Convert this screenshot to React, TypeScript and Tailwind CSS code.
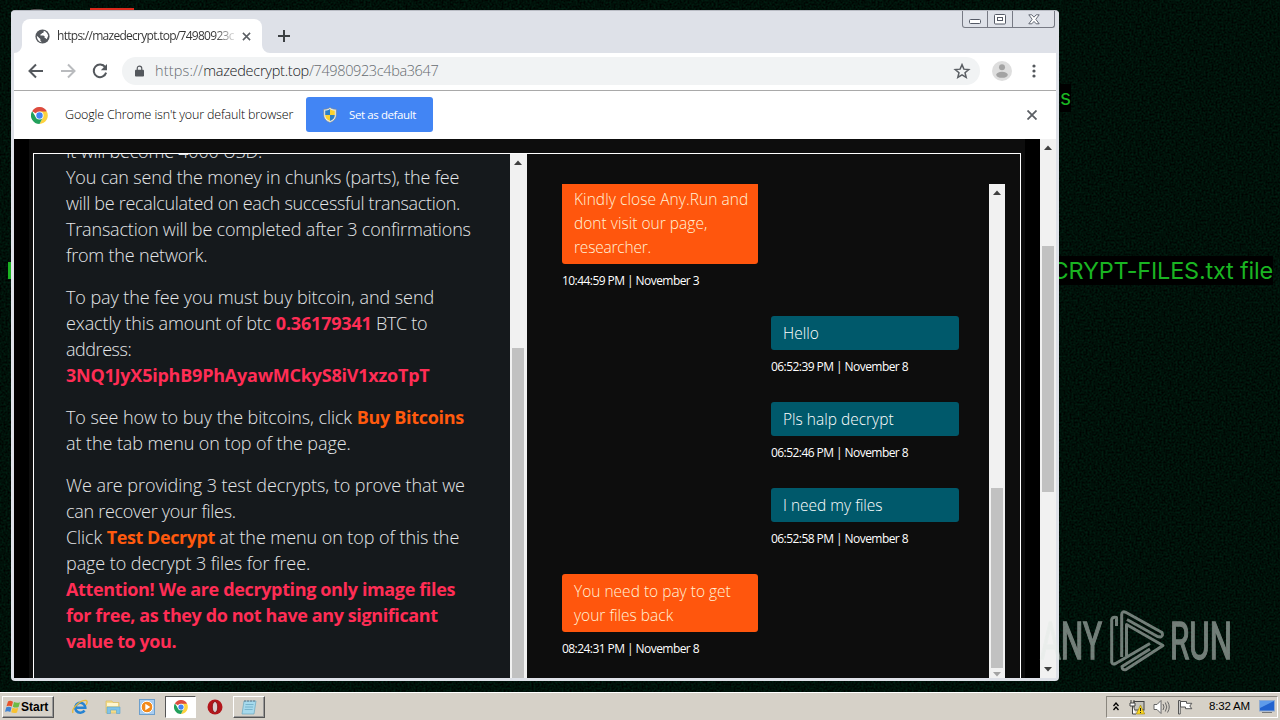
import type { ReactNode } from "react";

const CHAT = [
  {
    from: "support",
    time: "10:44:59 PM | November 3",
    lines: [
      <span className="tracking-[0.07px]">Kindly close Any.Run and</span>,
      <span className="tracking-[0.02px]">dont visit our page,</span>,
      <span className="tracking-[-0.2px]">researcher.</span>,
    ],
  },
  { from: "user", time: "06:52:39 PM | November 8", lines: ["Hello"] },
  { from: "user", time: "06:52:46 PM | November 8", lines: ["Pls halp decrypt"] },
  { from: "user", time: "06:52:58 PM | November 8", lines: ["I need my files"] },
  { from: "support", time: "08:24:31 PM | November 8", lines: ["You need to pay to get", "your files back"] },
];

function Arrow({ down = false, color = "#404040" }: { down?: boolean; color?: string }) {
  return (
    <svg viewBox="0 0 8 5" className={down ? "h-[5px] w-2 rotate-180" : "h-[5px] w-2"}>
      <path d="M0 5 4 0.5 8 5z" fill={color} />
    </svg>
  );
}

function ChromeLogo({ className }: { className?: string }) {
  return (
    <svg viewBox="0 0 48 48" className={className}>
      <path d="M24 24 3.2 12A24 24 0 0 1 44.800 12z" fill="#dd4b3e" />
      <path d="M24 13h20.800A24 24 0 0 1 24 48l9.500-18.500z" fill="#fdd23e" />
      <path d="M33.500 29.500 24 48A24 24 0 0 1 3.200 12l11.300 17.500z" fill="#22a05b" />
      <circle cx="24" cy="24" r="11.500" fill="#fff" />
      <circle cx="24" cy="24" r="9" fill="#4384f3" />
    </svg>
  );
}

function Shield() {
  return (
    <svg viewBox="0 0 14 16" className="h-4 w-3.5">
      <path d="M7 .5C5 2 3 2.300.8 2.300V8c0 4 3 6.300 6.200 7.500C10.200 14.300 13.200 12 13.200 8V2.300C11 2.300 9 2 7 .5z" fill="#e9edf0" stroke="#8c8a72" strokeWidth=".6" />
      <path d="M7 2C5.500 3 4 3.500 2.200 3.500V8H7z" fill="#2b7fc8" />
      <path d="M7 2c1.500 1 3 1.500 4.800 1.500V8H7z" fill="#fbd22f" />
      <path d="M2.200 8H7v6C4 13 2.200 11 2.200 8z" fill="#fbd22f" />
      <path d="M11.800 8H7v6c3-1 4.800-3 4.800-6z" fill="#2b7fc8" />
    </svg>
  );
}

function CaptionButtons() {
  return (
    <div className="absolute top-0 right-[4px] flex h-[17px] rounded-b-[3px] border border-t-0 border-[#777a84]">
      <div className="flex w-[25px] items-center justify-center border-r border-[#777a84]">
        <svg viewBox="0 0 12 5" className="mt-1 h-[5px] w-3">
          <rect x=".5" y=".5" width="11" height="4" rx="1" fill="#fff" stroke="#555a66" />
        </svg>
      </div>
      <div className="flex w-[25px] items-center justify-center border-r border-[#777a84]">
        <svg viewBox="0 0 12 11" className="h-[11px] w-3" fill="#fff" stroke="#555a66">
          <rect x=".5" y=".5" width="11" height="9.500" rx="1" />
          <rect x="3.500" y="3.500" width="5" height="3" />
        </svg>
      </div>
      <div className="flex w-[41px] items-center justify-center">
        <svg viewBox="0 0 12 11" className="h-[11px] w-3">
          <path d="M.8.8h3L6 3.200 8.200.8h3L7.800 5.300l3.400 4.500h-3L6 7.400 3.800 9.800h-3l3.400-4.500z" fill="#fff" stroke="#555a66" strokeWidth=".9" />
        </svg>
      </div>
    </div>
  );
}

function TabStrip() {
  return (
    <div className="relative flex h-[42px] shrink-0 items-end bg-[#dee1e8] pl-[3px]">
      <svg viewBox="0 0 8 8" className="h-2 w-2">
        <path d="M8 0v8H0a8 8 0 0 0 8-8z" fill="#fff" />
      </svg>
      <div className="flex h-[34px] w-[240px] items-center rounded-t-lg bg-white pr-[11px] pl-3">
        <svg viewBox="0 0 24 24" className="h-[17px] w-[17px]">
          <circle cx="12" cy="12" r="10" fill="#54585d" />
          <path d="M4 11 9 15.500V18l2 2c-4 0-7-4-7-9zM14 4c3 1 5.500 4 6 7l-2 5-2-2h-1v-2.500l-2-1H9V9l2-1V7h2z" fill="#fff" />
        </svg>
        <div className="w-[186px] shrink-0 bg-linear-to-r from-[#333] from-88% to-[#fff] bg-clip-text pl-1.5 font-['Open_Sans',sans-serif] text-[12px] tracking-[-0.72px] whitespace-nowrap text-transparent">
          https://mazedecrypt.top/74980923c
        </div>
        <svg viewBox="0 0 10 10" className="ml-auto h-[9px] w-[9px]" stroke="#5b5f64" strokeWidth="1.700">
          <path d="m1 1 8 8M9 1 1 9" />
        </svg>
      </div>
      <svg viewBox="0 0 8 8" className="h-2 w-2">
        <path d="M0 0v8h8a8 8 0 0 1-8-8z" fill="#fff" />
      </svg>
      <svg viewBox="0 0 12 12" className="mb-[11px] ml-2 h-3 w-3" stroke="#3c4043" strokeWidth="2">
        <path d="M6 0v12M0 6h12" />
      </svg>
      <CaptionButtons />
    </div>
  );
}

function Toolbar() {
  return (
    <div className="flex h-[38px] shrink-0 items-center border-b border-[#a9a9a9] bg-white pb-px pl-[14px]">
      <svg viewBox="0 0 16 16" className="h-4 w-4" fill="none" stroke="#54585d" strokeWidth="2">
        <path d="M15 8H2M8 1.500 1.500 8 8 14.500" />
      </svg>
      <svg viewBox="0 0 16 16" className="ml-4 h-4 w-4" fill="none" stroke="#b9bbbe" strokeWidth="2">
        <path d="M1 8h13M8 1.500 14.500 8 8 14.500" />
      </svg>
      <svg viewBox="0 0 16 16" className="ml-4 h-4 w-4">
        <path d="M13.200 4.200A6.300 6.300 0 1 0 14.100 9.600" fill="none" stroke="#54585d" strokeWidth="2" />
        <path d="M15 1v6.200H8.800z" fill="#54585d" />
      </svg>
      <div className="ml-3.5 flex h-7 w-[858px] items-center rounded-full bg-[#f1f3f4] pr-[9px] pl-[13px]">
        <svg viewBox="0 0 10 12" className="h-3 w-[9px]">
          <rect x="0" y="4.500" width="10" height="7.500" rx="1" fill="#54585d" />
          <path d="M2.500 5V3a2.500 2.500 0 0 1 5 0v2" fill="none" stroke="#54585d" strokeWidth="1.300" />
        </svg>
        <div className="ml-[11px] flex-1 font-['Open_Sans',sans-serif] text-[14.5px] font-light text-[#666b70]">
          <span className="tracking-[0.15px]">https://</span>
          <span className="tracking-[-0.27px] text-[#202124]">mazedecrypt.top</span>
          <span className="tracking-[-0.38px]">/74980923c4ba3647</span>
        </div>
        <svg viewBox="0 0 24 24" className="h-[18px] w-[18px]" fill="none" stroke="#5b5f64" strokeWidth="2">
          <path d="m12 3.500 2.500 6 6.500.5-5 4.200 1.600 6.300L12 17.200l-5.600 3.300L8 14.200 3 10l6.500-.5z" />
        </svg>
      </div>
      <svg viewBox="0 0 20 20" className="ml-3 h-5 w-5">
        <circle cx="10" cy="10" r="10" fill="#dedede" />
        <circle cx="10" cy="6.300" r="3" fill="#a3a3a3" />
        <ellipse cx="10" cy="13.800" rx="5.800" ry="3" fill="#a3a3a3" />
      </svg>
      <svg viewBox="0 0 4 14" className="ml-5 h-[14px] w-1" fill="#54585d">
        <circle cx="2" cy="2" r="1.600" />
        <circle cx="2" cy="7" r="1.600" />
        <circle cx="2" cy="12" r="1.600" />
      </svg>
    </div>
  );
}

function InfoBar() {
  return (
    <div className="flex h-12 shrink-0 items-center bg-white pr-[19px] pl-[17px]">
      <ChromeLogo className="h-[17px] w-[17px]" />
      <span className="ml-[17px] w-[241px] font-['Open_Sans',sans-serif] text-[12.5px] font-light tracking-[-0.16px] whitespace-nowrap text-black">
        Google Chrome isn't your default browser
      </span>
      <div className="mb-px flex h-[35px] w-[127px] items-center rounded-[3px] bg-[#4285f4] pl-[17px]">
        <Shield />
        <span className="ml-3 font-['Open_Sans',sans-serif] text-[11.5px] tracking-[-0.4px] whitespace-nowrap text-white">Set as default</span>
      </div>
      <svg viewBox="0 0 10 10" className="ml-auto h-2.5 w-2.5" stroke="#5b5f64" strokeWidth="1.800">
        <path d="m.5.5 9 9M9.500.5l-9 9" />
      </svg>
    </div>
  );
}

function Pink({ children }: { children: ReactNode }) {
  return <b className="font-bold text-[#ff2d55]">{children}</b>;
}

function Orange({ children }: { children: ReactNode }) {
  return <b className="font-bold text-[#ff5a0e]">{children}</b>;
}

function Line({ children, className = "tracking-[-0.2px]" }: { children: ReactNode; className?: string }) {
  return <div className={"h-[26px] whitespace-nowrap " + className}>{children}</div>;
}

function Instructions() {
  return (
    <div className="h-full flex-1 overflow-hidden bg-[#15191c] pl-8 font-['Open_Sans',sans-serif] text-[18px] leading-[25px] font-light text-[#e4e6e8]">
      <div className="-mt-[15px] flex flex-col gap-4">
        <div>
          <Line>It will become 4000 USD.</Line>
          <Line className="tracking-[-0.18px]">You can send the money in chunks (parts), the fee</Line>
          <Line className="tracking-[-0.31px]">will be recalculated on each successful transaction.</Line>
          <Line className="tracking-[-0.18px]">Transaction will be completed after 3 confirmations</Line>
          <Line>from the network.</Line>
        </div>
        <div>
          <Line className="tracking-[-0.07px]">To pay the fee you must buy bitcoin, and send</Line>
          <Line className="tracking-[-0.09px]">
            exactly this amount of btc <Pink><span className="tracking-[-0.2px]">0.36179341</span></Pink>
            <span className="tracking-[-0.3px]"> BTC to</span>
          </Line>
          <Line className="tracking-[-0.45px]">address:</Line>
          <Line className="tracking-[-0.23px]">
            <Pink>3NQ1JyX5iphB9PhAyawMCkyS8iV1xzoTpT</Pink>
          </Line>
        </div>
        <div>
          <Line className="tracking-[-0.07px]">
            To see how to buy the bitcoins, click <Orange><span className="tracking-[-0.3px]">Buy Bitcoins</span></Orange>
          </Line>
          <Line className="tracking-[-0.08px]">at the tab menu on top of the page.</Line>
        </div>
        <div>
          <Line className="tracking-[-0.06px]">We are providing 3 test decrypts, to prove that we</Line>
          <Line className="tracking-[-0.29px]">can recover your files.</Line>
          <Line className="tracking-[-0.07px]">
            Click <Orange><span className="tracking-[-0.45px]">Test Decrypt</span></Orange> at the menu on top of this the
          </Line>
          <Line className="tracking-[-0.08px]">page to decrypt 3 files for free.</Line>
          <Line className="tracking-[-0.36px]">
            <Pink>Attention! We are decrypting only image files</Pink>
          </Line>
          <Line className="tracking-[-0.4px]">
            <Pink>for free, as they do not have any significant</Pink>
          </Line>
          <Line className="tracking-[-0.43px]">
            <Pink>value to you.</Pink>
          </Line>
        </div>
      </div>
    </div>
  );
}

function Chat() {
  return (
    <div className="mt-[30px] ml-[35px] flex w-[443px] overflow-hidden">
      <div className="-mt-[2px] w-[397px] font-['Open_Sans',sans-serif]">
        {CHAT.map((m) => (
          <div key={m.time} className={m.from === "user" ? "ml-auto w-[188px]" : "w-[196px]"}>
            <div
              className={
                m.from === "user"
                  ? "rounded-[3px] bg-[#00596b] py-[5px] pl-3 text-[15.5px] leading-6 font-light whitespace-nowrap text-white"
                  : "rounded-[3px] bg-[#ff560d] py-[5px] pl-3 text-[15.5px] leading-6 font-light whitespace-nowrap text-[#fff2d8]"
              }
            >
              {m.lines.map((l, i) => (
                <div key={i}>{l}</div>
              ))}
            </div>
            <div className="mt-2 mb-[26px] h-[18px] text-[12px] leading-[18px] tracking-[-0.56px] whitespace-nowrap text-white">{m.time}</div>
          </div>
        ))}
      </div>
      <div className="ml-auto flex w-4 flex-col items-center bg-[#f1f1f1] pt-1.5">
        <Arrow />
        <div className="mt-[293px] h-[180px] w-3 bg-[#c1c1c1]" />
        <div className="mt-1">
          <Arrow down color="#a3a3a3" />
        </div>
      </div>
    </div>
  );
}

function Page() {
  return (
    <div className="flex min-h-0 flex-1 overflow-hidden bg-black">
      <div className="ml-[15px] flex w-[996px] flex-col bg-[#0d0d0d] pt-[14px] pl-1">
        <div className="flex min-h-0 w-[988px] flex-1 border border-b-0 border-white">
          <Instructions />
          <div className="flex w-[17px] shrink-0 flex-col bg-[#f1f1f1] pt-1.5 pl-[2px]">
            <div className="pl-[2px]">
              <Arrow />
            </div>
            <div className="mt-[183px] w-3 flex-1 bg-[#c1c1c1]" />
          </div>
          <div className="flex w-[493px] shrink-0">
            <Chat />
          </div>
        </div>
      </div>
      <div className="ml-auto flex w-4 flex-col items-center bg-[#f1f1f1] pt-1.5">
        <Arrow />
        <div className="mt-[96px] h-[246px] w-3 bg-[#c1c1c1]" />
        <div className="mt-auto mb-1.5">
          <Arrow down />
        </div>
      </div>
    </div>
  );
}

function Watermark() {
  return (
    <svg viewBox="0 0 220 70" className="absolute top-[605px] left-[1036px] h-[70px] w-[220px] opacity-50">
      <g fill="#e4ebe7" fontFamily="Roboto, sans-serif" fontSize="52" stroke="#e4ebe7" strokeWidth="1.4">
        <text x="4" y="54" textLength="62" lengthAdjust="spacingAndGlyphs">ANY</text>
        <text x="134" y="54" textLength="62" lengthAdjust="spacingAndGlyphs">RUN</text>
      </g>
      <path
        d="M80.500 21v-8.500q-4-1-4.800 2V57q.5 3 4 1.500L114 38.500M85.700 52V9.500q.3-4 4-2.200L126 27.500q1.500 3.500-1.500 4.500l-3-.5L91 14.500M90.500 51V19.500L127 40.500 90 64.500q-4 1-4-3L114 44"
        fill="none"
        stroke="#e4ebe7"
        strokeWidth="3"
        strokeLinejoin="round"
      />
    </svg>
  );
}

function Taskbar() {
  return (
    <div className="absolute bottom-0 left-0 flex h-[28px] w-full items-center border-t border-white bg-[#d6d1c8] pl-0.5">
      <div className="flex h-[22px] w-[52px] items-center border border-t-white border-r-[#555] border-b-[#555] border-l-white pl-0.5 shadow-[inset_-1px_-1px_#999]">
        <svg viewBox="0 0 16 14" className="h-[14px] w-4">
          <path d="M3 1.500q2-1.500 5 .3L6.800 6.500Q4 5 1.500 6.300z" fill="#e8532b" />
          <path d="M9 2q3 1.500 6 .2L13.600 7q-3 1.300-5.800-.3z" fill="#6cbb45" />
          <path d="M1.300 7.300Q4 6 6.500 7.500L5.300 12Q3 10.500 0 11.800z" fill="#3f83d3" />
          <path d="M7.500 7.800q3 1.400 5.700.3L12 12.500q-3 1.300-5.800-.2z" fill="#f8c231" />
        </svg>
        <span className="font-['Liberation_Sans',sans-serif] text-[12px] font-bold text-black">Start</span>
      </div>
      <svg viewBox="0 0 16 16" className="ml-[18px] h-4 w-4">
        <path d="M12.500 11.500A5 5 0 1 1 13.300 8.800H4.500" fill="none" stroke="#2683d2" strokeWidth="2.600" />
        <path d="M1 14C-1 9 9 1 14 1.500c2 .5 1 3 0 4.500" fill="none" stroke="#e6b93a" strokeWidth="1.300" />
      </svg>
      <svg viewBox="0 0 16 16" className="ml-[17px] h-4 w-4">
        <path d="M1 2h6l1 1.500h6V14H1z" fill="#f3dc8a" stroke="#d8b957" strokeWidth=".6" />
        <path d="M2 4h11v3H2z" fill="#fff6cf" />
        <path d="M2 8h13v6.500h-3.500V11h-6v3.500H2z" fill="#7fc3e8" stroke="#5ba4cf" strokeWidth=".6" />
      </svg>
      <svg viewBox="0 0 16 16" className="ml-[18px] h-4 w-4">
        <rect x=".5" y=".5" width="15" height="15" fill="#a9cdf0" stroke="#6d9fcc" />
        <circle cx="8" cy="8" r="5.800" fill="#f28a1c" stroke="#fff" />
        <path d="M6.300 4.700v6.600L11.300 8z" fill="#fff" />
      </svg>
      <div className="ml-[10px] flex h-[22px] w-[31px] items-center justify-center border border-t-[#555] border-r-white border-b-white border-l-[#555] bg-white">
        <ChromeLogo className="h-[14px] w-[14px]" />
      </div>
      <svg viewBox="0 0 16 16" className="ml-[11px] h-4 w-4">
        <circle cx="8" cy="8" r="7.500" fill="#b3161b" />
        <ellipse cx="8" cy="8" rx="2.700" ry="5.500" fill="#d9cfcf" stroke="#7c0d10" strokeWidth=".8" />
      </svg>
      <div className="ml-[10px] flex h-[22px] w-[32px] items-center justify-center border border-t-white border-r-[#555] border-b-[#555] border-l-white shadow-[inset_-1px_-1px_#999]">
        <svg viewBox="0 0 16 16" className="h-4 w-4">
          <path d="M3 2h12l-2 13H1z" fill="#a6d9ec" stroke="#6ba8bf" strokeWidth=".7" />
          <path d="M4.500 5.500h8M4 8h8M3.600 10.500h8" stroke="#6cabc4" strokeWidth=".8" />
          <path d="M4 1v2M7 1v2M10 1v2M13 1v2" stroke="#567" strokeWidth=".8" />
        </svg>
      </div>
      <div className="mr-[2px] ml-auto flex h-[22px] w-[172px] items-center border border-t-[#8a867e] border-r-white border-b-white border-l-[#8a867e] pl-1.5">
        <svg viewBox="0 0 6 9" className="h-[9px] w-1.5" fill="none" stroke="#000" strokeWidth="1.300">
          <path d="m.5 4 2.500-3 2.500 3M.5 8 3 5l2.500 3" />
        </svg>
        <svg viewBox="0 0 16 16" className="ml-[10px] h-4 w-4">
          <rect x="5" y="2.500" width="10" height="8.500" fill="#c6c4bd" stroke="#444" />
          <path d="M2 1v3M5 1v3M1 4h5v3H1zM3.500 7v8H7" fill="#fff" stroke="#444" />
          <path d="m11.500 6 4.200 9H7.300z" fill="#f9d51f" stroke="#9b8210" strokeWidth=".6" />
          <path d="M11.500 9v3M11.500 13v1" stroke="#222" />
        </svg>
        <svg viewBox="0 0 17 16" className="ml-2 h-4 w-[17px]" fill="none" stroke="#666">
          <path d="M1 5.500h3l4-4v13l-4-4H1z" fill="#fff" />
          <path d="M10 5q2 3 0 6M12.300 3.500q3 4.500 0 9M14.500 2.500q3.500 5.500 0 11" />
        </svg>
        <svg viewBox="0 0 16 16" className="ml-[7px] h-4 w-4" fill="#fff" stroke="#555">
          <path d="M1.500 1.500h1.700V15H1.500zM3.500 2.500h6v1.800h5.300l-2 2.700 2 2.700H8.500V8h-5z" />
        </svg>
        <span className="ml-4 font-['Liberation_Sans',sans-serif] text-[11.5px] tracking-[-0.2px] whitespace-nowrap text-black">8:32 AM</span>
        <svg viewBox="0 0 16 14" className="mr-0.5 ml-auto h-[14px] w-4">
          <rect x=".5" y=".5" width="15" height="10.500" fill="#2263cf" stroke="#8faad0" />
          <path d="M1 1h14L1 8z" fill="#5e9bea" />
          <path d="M3 12.500h10" stroke="#777" />
        </svg>
      </div>
    </div>
  );
}

export default function App() {
  return (
    <div className="relative h-[720px] w-[1280px] overflow-hidden bg-[#00110a]">
      <svg className="absolute inset-0 h-full w-full">
        <filter id="grain" x="0" y="0" width="100%" height="100%" colorInterpolationFilters="sRGB">
          <feTurbulence type="fractalNoise" baseFrequency="0.5" numOctaves="2" seed="4" />
          <feColorMatrix values="0 0 0 0 0  .2 0 0 0 -.035  .12 0 0 0 -.025  0 0 0 0 1" />
        </filter>
        <rect width="100%" height="100%" filter="url(#grain)" />
      </svg>
      <div className="absolute top-2 left-[90px] h-2 w-11 bg-[#d9281b]" />
      <div className="absolute top-[9px] left-[26px] h-2 w-[22px] rounded-t-full bg-[#555]" />
      <div className="absolute top-[84px] right-[209px] h-[28px] bg-black font-['Inter',sans-serif] text-[21px] leading-[27px] text-[#1ab422]">s</div>
      <div className="absolute top-[256px] right-[7px] h-[29px] bg-black font-['Inter',sans-serif] text-[23.5px] leading-[30px] tracking-[-0.2px] whitespace-nowrap text-[#1ab422]">
        DECRYPT-FILES.txt file
      </div>
      <div className="absolute top-[262px] left-2 h-[17px] w-[3px] bg-[#1ab422]" />

      <div className="absolute top-[10px] left-[11px] flex h-[671px] w-[1048px] flex-col overflow-hidden rounded-[4px] border-t border-[#b9bcc4] bg-[#dee1e8]">
        <TabStrip />
        <div className="mx-[3px] mb-[3px] flex min-h-0 flex-1 flex-col">
          <Toolbar />
          <InfoBar />
          <Page />
        </div>
      </div>
      <Watermark />
      <Taskbar />
    </div>
  );
}
